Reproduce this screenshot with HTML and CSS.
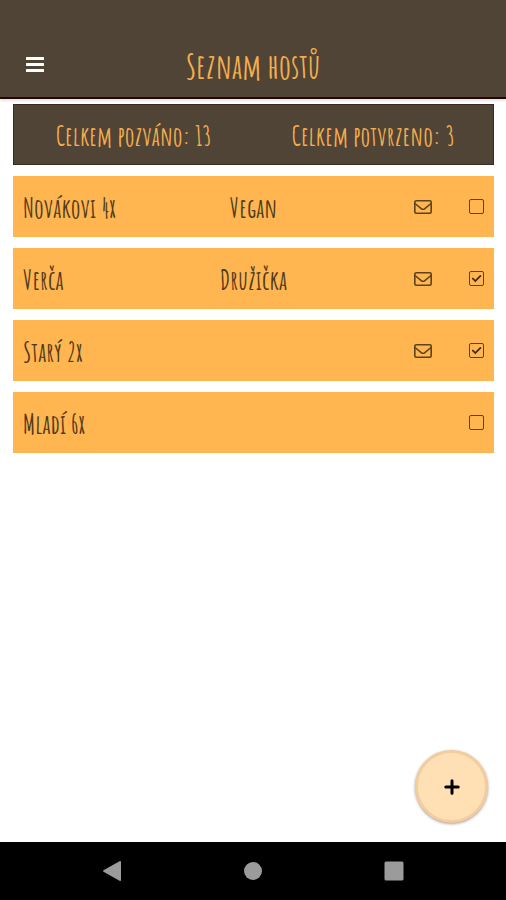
FILE: index.html
```html
<!DOCTYPE html>
<html lang="cs">
<head>
<meta charset="utf-8">
<meta name="viewport" content="width=device-width, initial-scale=1">
<title>Seznam hostů</title>
<link rel="stylesheet" href="styles.css">
</head>
<body>
<header class="topbar">
  <button class="icon-button" type="button" aria-label="Menu">
    <svg width="20" height="18" viewBox="0 0 20 18" fill="#fff"><rect x="1" y="1" width="18" height="3" rx="0.5"/><rect x="1" y="7" width="18" height="3" rx="0.5"/><rect x="1" y="13" width="18" height="3" rx="0.5"/></svg>
  </button>
  <h1 class="title">Seznam hostů</h1>
</header>
<main class="content">
  <section class="summary">
    <p class="text">Celkem pozváno: 13</p>
    <p class="text">Celkem potvrzeno: 3</p>
  </section>
  <ul class="guests">
    <li class="guest">
      <label class="text" for="g1">Novákovi 4x</label>
      <span class="text">Vegan</span>
      <div class="actions">
        <button class="icon-button" type="button" aria-label="Pozvánka"><svg class="mail" viewBox="0 0 18 14"><rect x="0.8" y="0.8" width="16.4" height="12.4" rx="1.5"/><path d="M1 3.5 7.5 8.8Q9 9.8 10.5 8.8L17 3.5"/></svg></button>
        <input class="check" type="checkbox" id="g1">
      </div>
    </li>
    <li class="guest">
      <label class="text" for="g2">Verča</label>
      <span class="text">Družička</span>
      <div class="actions">
        <button class="icon-button" type="button" aria-label="Pozvánka"><svg class="mail" viewBox="0 0 18 14"><rect x="0.8" y="0.8" width="16.4" height="12.4" rx="1.5"/><path d="M1 3.5 7.5 8.8Q9 9.8 10.5 8.8L17 3.5"/></svg></button>
        <input class="check" type="checkbox" id="g2" checked>
      </div>
    </li>
    <li class="guest">
      <label class="text" for="g3">Starý 2x</label>
      <span class="text"></span>
      <div class="actions">
        <button class="icon-button" type="button" aria-label="Pozvánka"><svg class="mail" viewBox="0 0 18 14"><rect x="0.8" y="0.8" width="16.4" height="12.4" rx="1.5"/><path d="M1 3.5 7.5 8.8Q9 9.8 10.5 8.8L17 3.5"/></svg></button>
        <input class="check" type="checkbox" id="g3" checked>
      </div>
    </li>
    <li class="guest">
      <label class="text" for="g4">Mladí 6x</label>
      <span class="text"></span>
      <div class="actions">
        <input class="check" type="checkbox" id="g4">
      </div>
    </li>
  </ul>
  <button class="add" type="button" aria-label="Přidat hosta">
    <svg width="16" height="16" viewBox="0 0 16 16" stroke="#000" stroke-width="3" stroke-linecap="round"><path d="M8 1.8V14.2M1.8 8H14.2"/></svg>
  </button>
</main>
<nav class="system-bar">
  <button class="icon-button" type="button" aria-label="Zpět"><svg width="20" height="22" viewBox="0 0 20 22" fill="#9b9b9b"><path d="M1.5 10.2 17.5 1.2Q19 .5 19 2V20Q19 21.5 17.5 20.8L1.5 11.8Q.5 11 1.5 10.2Z"/></svg></button>
  <button class="icon-button" type="button" aria-label="Domů"><svg width="20" height="20" viewBox="0 0 20 20" fill="#9b9b9b"><circle cx="10" cy="10" r="9"/></svg></button>
  <button class="icon-button" type="button" aria-label="Poslední aplikace"><svg width="20" height="20" viewBox="0 0 20 20" fill="#9b9b9b"><rect x="0.5" y="0.5" width="19" height="19" rx="1.5"/></svg></button>
</nav>
</body>
</html>
```
FILE: styles.css
```css
* {
  box-sizing: border-box;
}

body {
  display: flex;
  flex-direction: column;
  min-height: 100vh;
  margin: 0;
  background: #fff;
  color: #4f3b1d;
  font-family: "Amatic SC", "Liberation Sans Narrow", "Liberation Sans", sans-serif;
  font-size: 27px;
  font-weight: 700;
  line-height: 36px;
}

h1,
p,
ul {
  margin: 0;
  padding: 0;
}

.icon-button {
  display: flex;
  padding: 0;
  border: 0;
  background: none;
  color: inherit;
  cursor: pointer;
}

.topbar {
  display: grid;
  grid-template-columns: 1fr auto 1fr;
  align-items: center;
  padding: 45px 25px 12px;
  border-bottom: 2px solid #260606;
  background: #504437;
  box-shadow: 0 2px 2px #e6e3e3;
}

.title {
  padding-top: 2px;
  color: #f5ad4c;
  font-size: 34px;
  line-height: 38px;
}

.content {
  position: relative;
  flex: 1;
  padding: 5px 12px 0 13px;
}

.summary {
  display: grid;
  grid-template-columns: 1fr 1fr;
  align-items: center;
  min-height: 61px;
  margin-bottom: 11px;
  border: 1px solid #382c20;
  background: #504437;
  color: #f5ad4c;
  text-align: center;
}

.text {
  padding-top: 2px;
}

.guests {
  display: grid;
  gap: 11px;
  list-style: none;
}

.guest {
  display: grid;
  grid-template-columns: 1fr auto 1fr;
  align-items: center;
  min-height: 61px;
  padding: 0 10px;
  background: #ffb550;
}

.actions {
  display: flex;
  align-items: center;
  justify-content: flex-end;
  gap: 37px;
}

.mail {
  width: 18px;
  height: 14px;
  fill: none;
  stroke: #5e421c;
  stroke-width: 1.6;
}

.check {
  display: grid;
  place-items: center;
  width: 15px;
  height: 15px;
  margin: 0;
  border: 1px solid #5e421c;
  border-radius: 2px;
  appearance: none;
}

.check:checked::after {
  width: 10px;
  height: 8px;
  background: #3d2c16;
  clip-path: polygon(0 50%, 14% 36%, 38% 66%, 88% 4%, 100% 18%, 38% 96%);
  content: "";
}

.add {
  position: absolute;
  right: 18px;
  bottom: 19px;
  display: grid;
  place-items: center;
  width: 73px;
  height: 73px;
  padding: 0;
  border: 3px solid #f2cd9e;
  border-radius: 50%;
  background: #ffe0b5;
  box-shadow: 0 1px 3px #a99;
  cursor: pointer;
}

.system-bar {
  display: flex;
  align-items: center;
  justify-content: space-between;
  min-height: 58px;
  padding: 0 102px;
  background: #000;
}
```
